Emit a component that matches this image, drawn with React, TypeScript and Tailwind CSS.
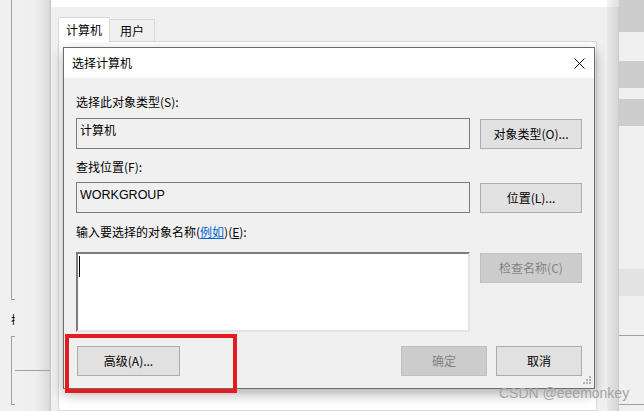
import React from 'react';

function CloseIcon() {
  return (
    <svg width="11" height="11" viewBox="0 0 11 11" className="block">
      <path d="M0.5 0.5 L10.5 10.5 M10.5 0.5 L0.5 10.5" stroke="#000" strokeWidth="1" fill="none" />
    </svg>
  );
}

function SizeGrip() {
  return (
    <svg width="9" height="9" viewBox="0 0 9 9" className="block">
      <rect x="6" y="0" width="2" height="2" fill="#b4b4b4" />
      <rect x="3" y="3" width="2" height="2" fill="#b4b4b4" />
      <rect x="6" y="3" width="2" height="2" fill="#b4b4b4" />
      <rect x="0" y="6" width="2" height="2" fill="#b4b4b4" />
      <rect x="3" y="6" width="2" height="2" fill="#b4b4b4" />
      <rect x="6" y="6" width="2" height="2" fill="#b4b4b4" />
    </svg>
  );
}

function Btn({ children, disabled, className = '' }: { children: React.ReactNode; disabled?: boolean; className?: string }) {
  return (
    <button
      type="button"
      className={`flex h-[30px] items-center justify-center border ${
        disabled ? 'border-[#bfbfbf] bg-[#cccccc] text-[#838383]' : 'border-[#adadad] bg-[#e1e1e1] text-black'
      } ${className}`}
    >
      {children}
    </button>
  );
}

function ReadOnlyBox({ value, latin }: { value: string; latin?: boolean }) {
  return (
    <div className="h-[31px] w-[394px] border border-[#7a7a7a] bg-[#f0f0f0] pl-[3px] pt-[3px]">
      <span className={latin ? "font-['Liberation_Sans',Arial,sans-serif] text-[12.5px]" : ''}>{value}</span>
    </div>
  );
}

function LeftStrip() {
  return (
    <div className="flex w-[50px] shrink-0">
      <div className="w-[11px]" />
      <div className="flex w-[4px] flex-col">
        <div className="h-[300px] border-b border-l border-[#a0a0a0]" />
        {/* label of the group box behind, cut off by the window */}
        <div className="mt-[12px] h-[13px] w-[4px] overflow-hidden">
          <span className="text-[12px] leading-[13px]">控</span>
        </div>
        <div className="mt-[11px] h-[69px] border-y border-l border-[#a0a0a0]" />
      </div>
      <div className="flex w-[35px] flex-col bg-[linear-gradient(to_right,#f0f0f0_0%,#eeeeee_60%,#dcdcdc_96%,#cfcfcf_100%)]">
        <div className="h-[370px]" />
        <div className="border-t border-[#a0a0a0]" />
      </div>
    </div>
  );
}

function RightStrip() {
  return (
    <div className="flex shrink-0">
      <div className="flex w-[12px] flex-col">
        <div className="h-[7px] bg-[linear-gradient(to_right,#f4f4f4,#dedede)]" />
        <div className="flex-1 bg-[linear-gradient(to_right,#eaeaea_0%,#e2e2e2_30%,#d6d6d6_90%,#c4c4c4_100%)]" />
      </div>
      <div className="flex w-[25px] flex-col bg-[#f0f0f0]">
        <div className="h-[32px] bg-[#cdcdcd]" />
        <div className="h-[29px]" />
        <div className="h-[27px] bg-[#cdcdcd]" />
        <div className="h-[11px]" />
        <div className="h-[27px] bg-[#cdcdcd]" />
        <div className="h-[143px]" />
        <div className="h-[27px] bg-[#e3e3e3]" />
        <div className="h-[40px] border-b border-[#a0a0a0]" />
        <div className="h-[69px] border-b border-[#a0a0a0]" />
      </div>
    </div>
  );
}

function Dialog() {
  return (
    <div className="relative flex h-[342px] w-[532px] flex-col border border-[#6c6c6c] bg-[#f0f0f0] shadow-[0_5px_12px_rgba(0,0,0,0.32)]">
      <div className="flex h-[30px] items-center justify-between bg-white pl-[8px] pr-[9px]">
        <span>选择计算机</span>
        <CloseIcon />
      </div>

      <div className="flex flex-col px-[12px] pt-[16px]">
        <div>选择此对象类型(S):</div>
        <div className="mt-[8px] flex items-start">
          <ReadOnlyBox value="计算机" />
          <Btn className="ml-[10px] mt-[1px] w-[102px]">对象类型(O)...</Btn>
        </div>

        <div className="mt-[10px]">查找位置(F):</div>
        <div className="mt-[7px] flex items-start">
          <ReadOnlyBox value="WORKGROUP" latin />
          <Btn className="ml-[10px] mt-[1px] w-[102px]">位置(L)...</Btn>
        </div>

        <div className="mt-[11px]">
          输入要选择的对象名称(<span className="text-[#0066cc] underline">例如</span>)(<span className="underline">E</span>):
        </div>
        <div className="mt-[12px] flex items-start">
          <div className="h-[80px] w-[394px] border-2 border-b-[#e3e3e3] border-l-[#7d7d7d] border-r-[#e3e3e3] border-t-[#7d7d7d] bg-white pl-[1px] pt-[2px]">
            <div className="h-[21px] w-[1px] bg-black" />
          </div>
          <Btn disabled className="ml-[10px] mt-[1px] w-[102px]">检查名称(C)</Btn>
        </div>

        <div className="mt-[14px] flex items-start justify-between">
          <Btn className="ml-[1px] w-[103px]">高级(A)...</Btn>
          <div className="flex gap-[9px]">
            <Btn disabled className="w-[86px]">确定</Btn>
            <Btn className="w-[86px]">取消</Btn>
          </div>
        </div>
      </div>

      <div className="absolute bottom-[3px] right-[2px]">
        <SizeGrip />
      </div>
    </div>
  );
}

function ParentWindow() {
  return (
    <div className="flex w-[557px] shrink-0 flex-col border-l border-[#c8c8c8] bg-[#f0f0f0]">
      <div className="h-[7px] bg-white" />
      <div className="flex h-[34px] items-end pl-[7px] pt-[10px]">
        <div className="z-10 -mb-px flex h-[25px] w-[52px] items-start justify-center border border-b-0 border-[#d9d9d9] bg-white pt-[4px]">
          计算机
        </div>
        <div className="flex h-[22px] w-[45px] items-start justify-center border border-b-0 border-l-0 border-[#d9d9d9] bg-[#f0f0f0] pt-[3px]">
          用户
        </div>
      </div>
      <div className="ml-[7px] mr-[10px] flex-1 border border-[#d9d9d9] bg-white pl-[4px] pt-[5px]">
        <Dialog />
      </div>
    </div>
  );
}

export default function App() {
  return (
    <div className="relative flex h-[411px] w-[644px] overflow-hidden bg-[#f0f0f0] font-['Noto_Sans_CJK_SC',sans-serif] text-[12px] leading-[16px] text-black">
      <LeftStrip />
      <ParentWindow />
      <RightStrip />
      <div className="pointer-events-none absolute left-[65px] top-[334px] h-[59px] w-[172px] border-4 border-[#e41b1f]" />
      <div className="pointer-events-none absolute left-[499px] top-[385px] font-['Liberation_Sans',Arial,sans-serif] text-[14px] leading-[16px] text-[#a3a3a3]">
        CSDN @eeemonkey
      </div>
    </div>
  );
}
